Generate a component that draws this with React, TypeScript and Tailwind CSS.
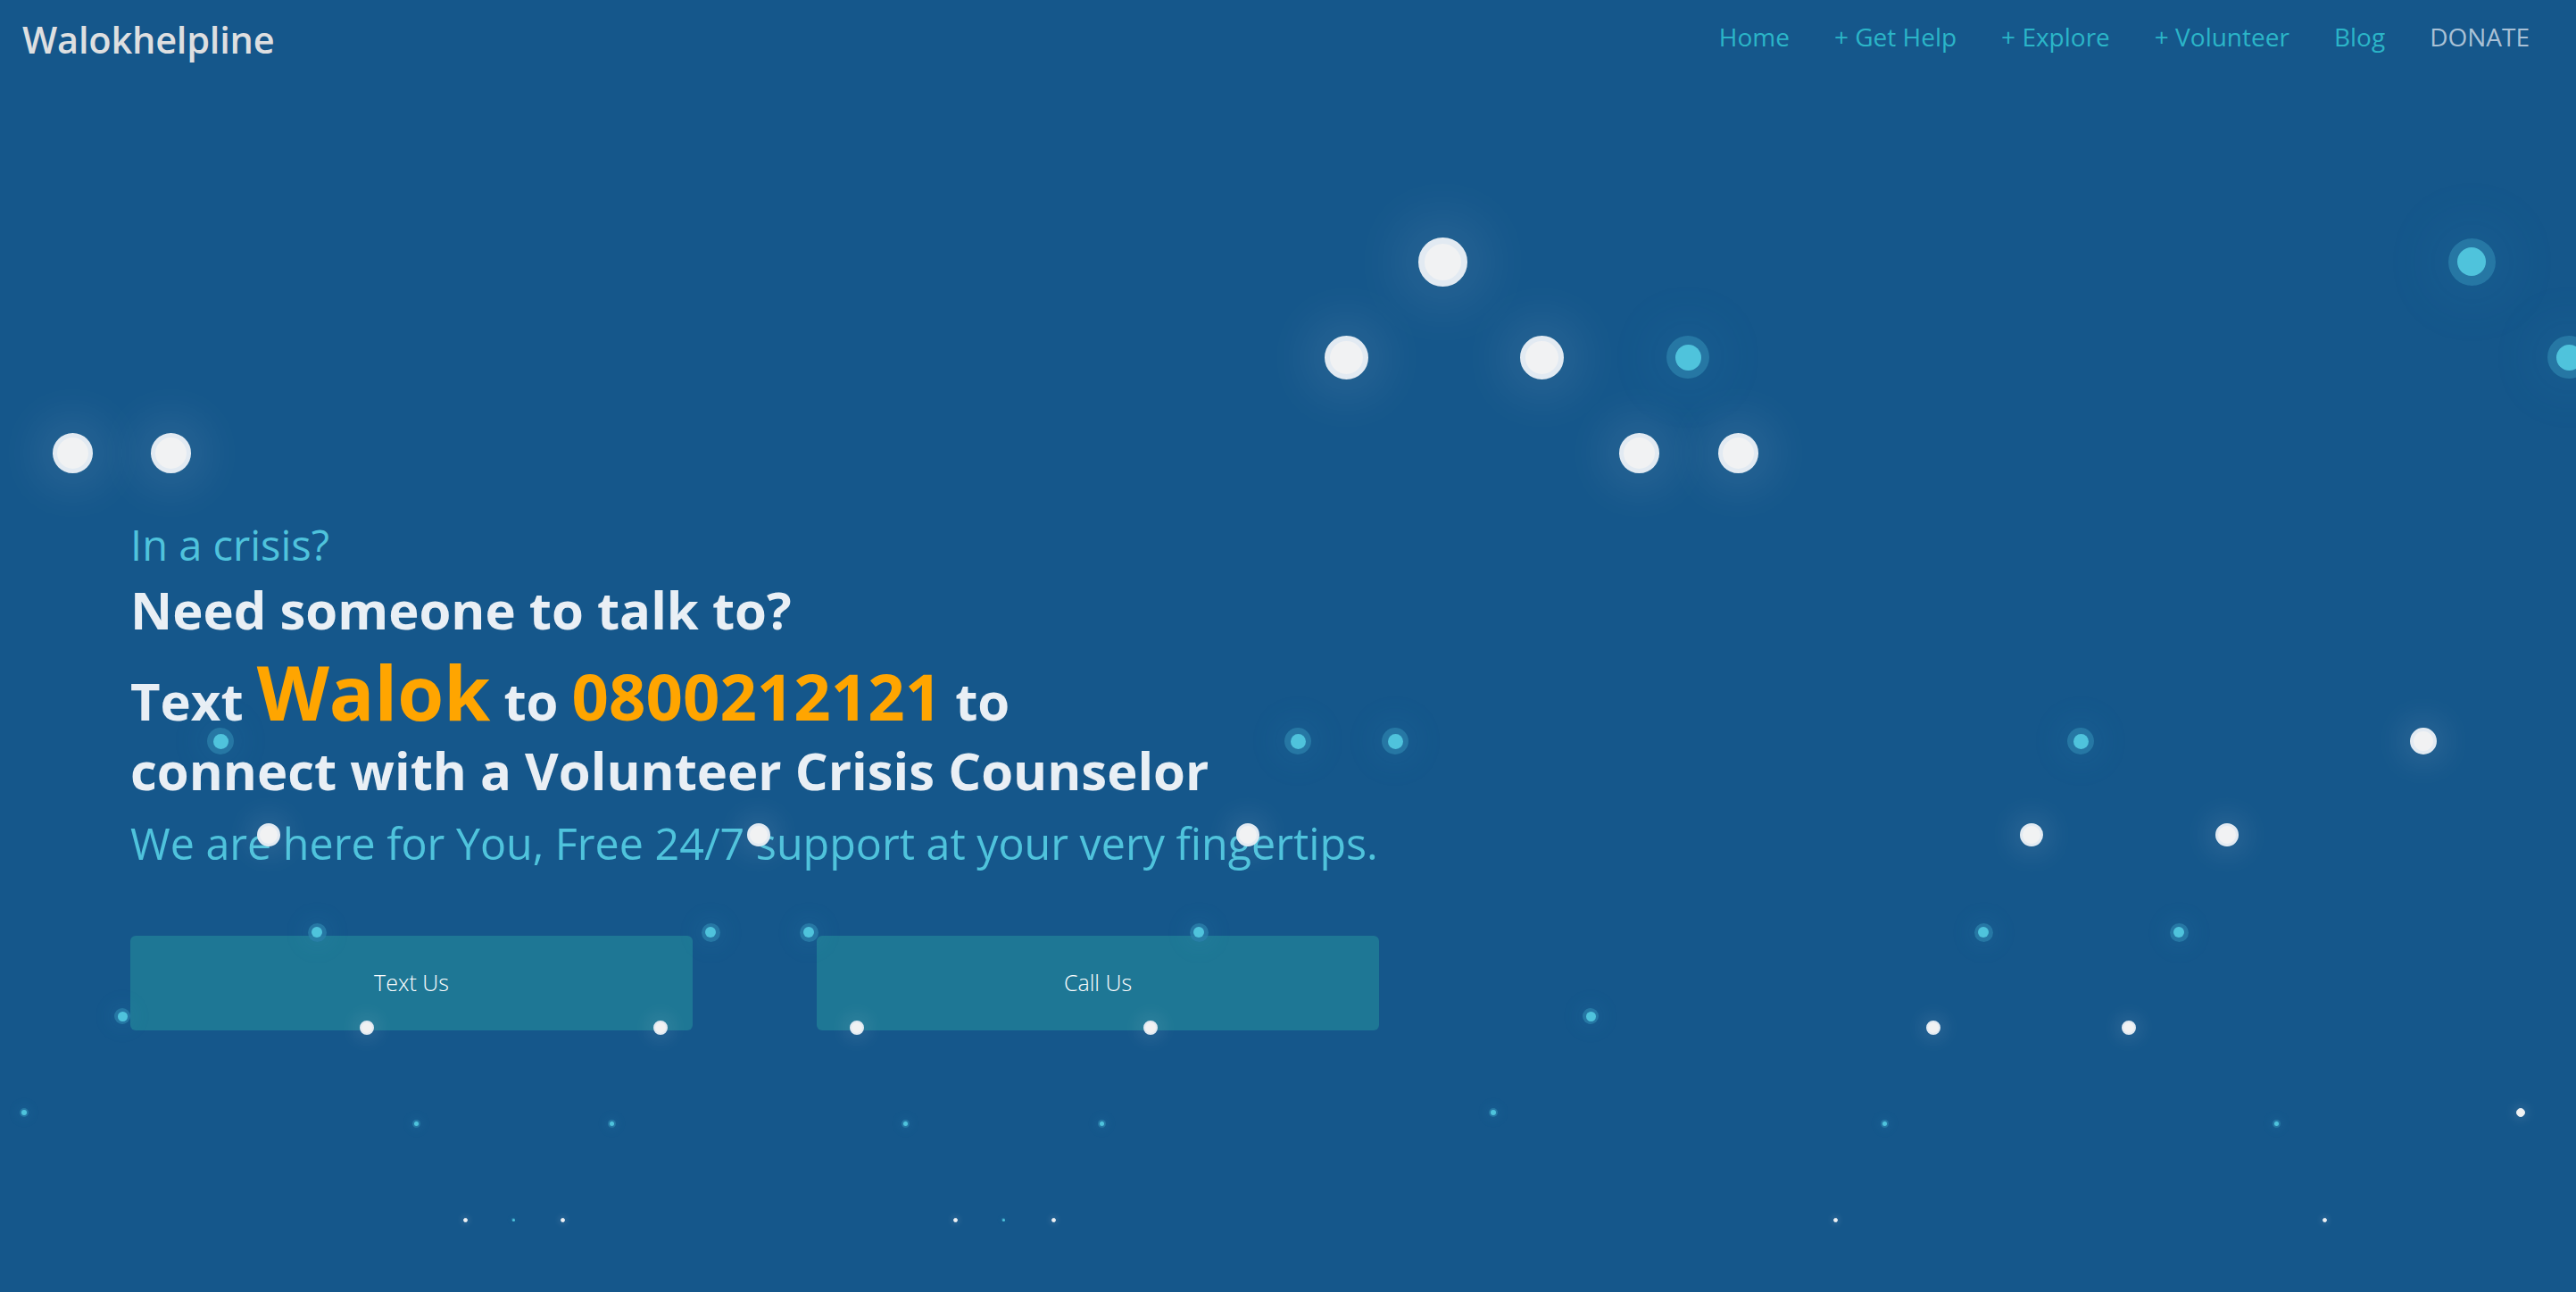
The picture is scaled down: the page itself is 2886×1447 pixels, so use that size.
import React from "react";

type Dot = { x: number; y: number; d: number; kind: "white" | "cyan"; inner?: number };

const W = (x: number, y: number, d: number): Dot => ({ x, y, d, kind: "white" });
const C = (x: number, y: number, d: number, inner: number): Dot => ({ x, y, d, kind: "cyan", inner });

const dots: Dot[] = [
  W(1616, 293, 55),
  C(2769, 293, 53, 32),
  W(1508, 400, 49),
  W(1727, 400, 49),
  C(1891, 400, 48, 29),
  C(2878, 400, 48, 29),
  W(81, 507, 45),
  W(191, 507, 45),
  W(1836, 507, 45),
  W(1947, 507, 45),
  C(247, 830, 30, 17),
  C(1454, 830, 30, 17),
  C(1563, 830, 30, 17),
  C(2331, 830, 30, 17),
  W(2715, 830, 30),
  ...[301, 850, 1398, 2276, 2495].map((x) => W(x, 935, 26)),
  ...[355, 796, 906, 1343, 2222, 2441].map((x) => C(x, 1044, 21, 12)),
  C(137, 1138, 18, 11),
  C(1782, 1138, 18, 11),
  ...[411, 740, 960, 1289, 2166, 2385].map((x) => W(x, 1151, 16)),
  C(27, 1246, 10, 6),
  C(1673, 1246, 10, 6),
  W(2824, 1246, 10),
  ...[466, 685, 1014, 1234, 2111, 2550].map((x) => C(x, 1258, 9, 5)),
  ...[521, 630, 1070, 1180, 2056, 2604].map((x) => W(x, 1366, 5)),
  C(575, 1366, 4, 3),
  C(1124, 1366, 4, 3),
];

function Particle({ dot }: { dot: Dot }) {
  const glow = Math.round(dot.d * 1.3);
  if (dot.kind === "white") {
    return (
      <div
        className="absolute rounded-full bg-[#f1f2f3] border-[#e2eaf2]"
        style={{
          left: dot.x - dot.d / 2,
          top: dot.y - dot.d / 2,
          width: dot.d,
          height: dot.d,
          borderWidth: Math.max(1, Math.round(dot.d * 0.12)),
          boxShadow: `0 0 ${glow}px ${Math.round(dot.d * 0.3)}px rgba(255,255,255,0.12)`,
        }}
      />
    );
  }
  const inner = dot.inner ?? dot.d * 0.6;
  return (
    <div
      className="absolute rounded-full bg-[#2b80aa]/80 flex items-center justify-center"
      style={{
        left: dot.x - dot.d / 2,
        top: dot.y - dot.d / 2,
        width: dot.d,
        height: dot.d,
        boxShadow: `0 0 ${glow}px ${Math.round(dot.d * 0.3)}px rgba(80,190,225,0.08)`,
      }}
    >
      <div className="rounded-full bg-[#4fc3dc]" style={{ width: inner, height: inner }} />
    </div>
  );
}

const navLinks = ["Home", "+ Get Help", "+ Explore", "+ Volunteer", "Blog"];

export default function App() {
  return (
    <div className="relative h-[1447px] w-full overflow-hidden bg-[#15578b] font-['Open_Sans','Noto_Sans',sans-serif]">
      <header className="relative flex items-center justify-between pl-[25px] pr-[52px] h-[86px]">
        <a href="#" className="text-[41.5px] font-semibold text-[#dedfe0] tracking-[-0.2px] mt-[2px]">
          Walokhelpline
        </a>
        <nav className="flex items-center gap-[50px] text-[28px] -mt-[5px]">
          {navLinks.map((link) => (
            <a key={link} href="#" className="text-[#2bb5c8]">
              {link}
            </a>
          ))}
          <a href="#" className="text-[#a9c1d6]">DONATE</a>
        </nav>
      </header>

      <section className="relative pl-[146px] pt-[500px]">
        <p className="text-[47px] leading-[48px] text-[#4fc3dc]">In a crisis?</p>
        <h1 className="mt-[20px] text-[58px] leading-[58px] font-bold text-[#e9eff5]">
          Need someone to talk to?
        </h1>
        <h2 className="mt-[23px] text-[58px] leading-[80px] font-bold text-[#e9eff5]">
          Text <span className="text-[84px] text-[#ffa500]">Walok</span> to{" "}
          <span className="text-[72.5px] text-[#ffa500]">0800212121</span> to
          <br />
          <span className="block leading-[74px] mt-[1px]">connect with a Volunteer Crisis Counselor</span>
        </h2>
        <p className="mt-[15px] text-[48.4px] leading-[58px] text-[#4fc3dc]">
          We are here for You, Free 24/7 support at your very fingertips.
        </p>
        <div className="mt-[75px] flex gap-[139px]">
          <button className="w-[630px] h-[106px] rounded-[6px] bg-[#1e7795] text-[25px] font-light text-white">
            Text Us
          </button>
          <button className="w-[630px] h-[106px] rounded-[6px] bg-[#1e7795] text-[25px] font-light text-white">
            Call Us
          </button>
        </div>
      </section>

      <div className="pointer-events-none absolute inset-0">
        {dots.map((dot, i) => (
          <Particle key={i} dot={dot} />
        ))}
      </div>
    </div>
  );
}
